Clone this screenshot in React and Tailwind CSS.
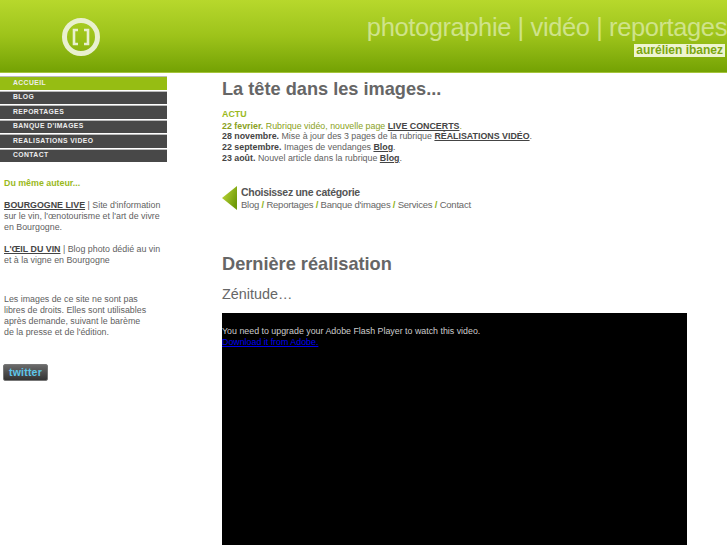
import React from "react";

const menu = ["ACCUEIL", "BLOG", "REPORTAGES", "BANQUE D'IMAGES", "REALISATIONS VIDEO", "CONTACT"];

const news = [
  { date: "28 novembre.", text: "Mise à jour des 3 pages de la rubrique ", link: "RÉALISATIONS VIDÉO" },
  { date: "22 septembre.", text: "Images de vendanges ", link: "Blog" },
  { date: "23 août.", text: "Nouvel article dans la rubrique ", link: "Blog" },
];

const cats = ["Blog", "Reportages", "Banque d'images", "Services", "Contact"];

const Logo = () => (
  <svg width="40" height="40" viewBox="0 0 40 40">
    <circle cx="20" cy="20" r="16.5" fill="none" stroke="#e9f0cf" strokeWidth="5" />
    <path d="M17 13h-4v14h4M23 13h4v14h-4" fill="none" stroke="#e9f0cf" strokeWidth="2.6" />
  </svg>
);

const Arrow = () => (
  <svg width="16" height="24" viewBox="0 0 16 24">
    <defs>
      <linearGradient id="arrowFill" x1="0" y1="0" x2="1" y2="0.6">
        <stop offset="0" stopColor="#c4dc3c" />
        <stop offset="1" stopColor="#6f9a08" />
      </linearGradient>
    </defs>
    <polygon points="0,12 15,0 15,24" fill="url(#arrowFill)" />
  </svg>
);

export default function App() {
  return (
    <div className="h-screen overflow-hidden bg-white font-['Liberation_Sans',Arial,sans-serif] text-[8.85px] leading-[10.7px] text-[#5f5f5f]">
      <header className="flex h-[73px] justify-between border-b border-[#a4c43a] bg-gradient-to-b from-[#b7d82c] via-[#9dc31a] to-[#74a203]">
        <div className="ml-[61px] mt-[17px]">
          <Logo />
        </div>
        <div className="flex flex-col items-end">
          <div className="mt-[11px] whitespace-nowrap text-[25.5px] leading-[32px] tracking-[-0.4px] text-[#cfe38a]">
            photographie | vidéo | reportages
          </div>
          <div className="mr-[2px] mt-[1px] bg-[#eef4d0] px-[2px] text-[12px] font-bold leading-[13px] text-[#7ba60f]">
            aurélien ibanez
          </div>
        </div>
      </header>

      <div className="flex">
        <aside className="w-[167px] shrink-0 pt-[3px]">
          <nav className="flex flex-col">
            {menu.map((item, i) => (
              <a
                key={item}
                className={`mb-[1px] flex h-[13.5px] items-center border-t border-[#bbb] pl-[13px] text-[6.8px] font-bold tracking-[0.4px] text-[#eee] ${
                  i === 0 ? "bg-[#96bd13]" : "bg-[#484848]"
                }`}
              >
                {item}
              </a>
            ))}
          </nav>

          <div className="whitespace-nowrap pl-[4px] pt-[15px] leading-[11px]">
            <p className="font-bold text-[#9ab91c]">Du même auteur...</p>
            <p className="mt-[11px]">
              <a className="font-bold text-[#444] underline">BOURGOGNE LIVE</a> | Site d'information
              <br />
              sur le vin, l'œnotourisme et l'art de vivre
              <br />
              en Bourgogne.
            </p>
            <p className="mt-[11px]">
              <a className="font-bold text-[#444] underline">L'ŒIL DU VIN</a> | Blog photo dédié au vin
              <br />
              et à la vigne en Bourgogne
            </p>
            <p className="mt-[28px]">
              Les images de ce site ne sont pas
              <br />
              libres de droits. Elles sont utilisables
              <br />
              après demande, suivant le barème
              <br />
              de la presse et de l'édition.
            </p>
            <div className="-ml-[1px] mt-[26px] flex h-[17px] w-[45px] items-center justify-center rounded-[2px] border border-[#777] bg-gradient-to-b from-[#6a6a6a] to-[#333] text-[10.5px] font-bold tracking-[0.2px] text-[#5cc6ea]">
              twitter
            </div>
          </div>
        </aside>

        <main className="ml-[55px] w-[465px] shrink-0">
          <h1 className="mt-[4px] text-[18.2px] font-bold leading-[24px] text-[#666]">La tête dans les images...</h1>

          <div className="mt-[8px]">
            <p className="mb-[1px] font-bold text-[#9ab91c]">ACTU</p>
            <p className="text-[#8a9f22]">
              <b>22 fevrier.</b> Rubrique vidéo, nouvelle page{" "}
              <a className="font-bold text-[#444] underline">LIVE CONCERTS</a>.
            </p>
            {news.map((n) => (
              <p key={n.date}>
                <b className="text-[#444]">{n.date}</b> {n.text}
                <a className="font-bold text-[#444] underline">{n.link}</a>.
              </p>
            ))}
          </div>

          <div className="mt-[22px] flex items-center gap-[3px]">
            <Arrow />
            <div>
              <p className="text-[10.5px] font-bold leading-[13px] tracking-[-0.3px] text-[#555]">Choisissez une catégorie</p>
              <p className="text-[9.5px] leading-[12px] tracking-[-0.22px] text-[#666]">
                {cats.map((c, i) => (
                  <span key={c}>
                    {i > 0 && <b className="text-[#8db31a]"> / </b>}
                    {c}
                  </span>
                ))}
              </p>
            </div>
          </div>

          <h2 className="mt-[41px] text-[18.2px] font-bold leading-[24px] text-[#666]">Dernière réalisation</h2>
          <p className="mt-[9px] text-[14.4px] leading-[18px] text-[#666]">Zénitude…</p>

          <div className="mt-[10px] h-[300px] bg-black pt-[12px] text-[#ccc]">
            <p className="leading-[12px]">You need to upgrade your Adobe Flash Player to watch this video.</p>
            <a className="text-[#0000ee] underline">Download it from Adobe.</a>
          </div>
        </main>
      </div>
    </div>
  );
}
